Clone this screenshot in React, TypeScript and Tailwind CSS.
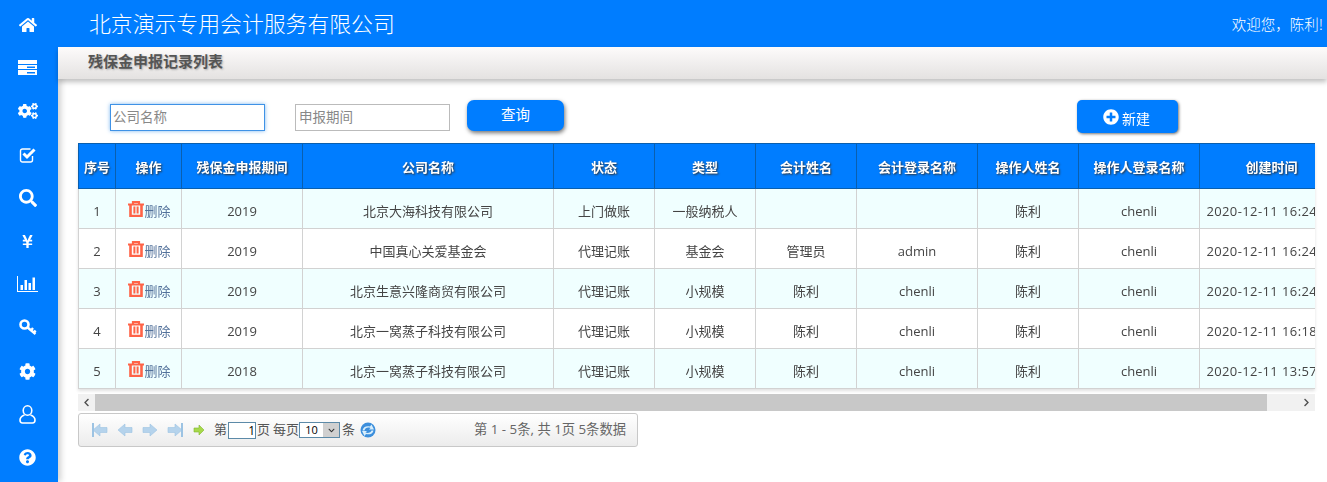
import { FaHome, FaCogs, FaSearch, FaYenSign, FaCog, FaQuestionCircle, FaPlusCircle, FaChevronLeft, FaChevronRight, FaChevronDown } from "react-icons/fa";

const font = "font-['Open_Sans','Noto_Sans_CJK_SC',sans-serif]";

function ServerIcon() {
  return (
    <svg viewBox="0 0 19 15" className="w-[19px] h-[15px]" fill="white">
      <rect x="0" y="0" width="19" height="4" />
      <path fillRule="evenodd" d="M0 5h19v4H0zM9 6.500v1.500h8V6.500z" />
      <path fillRule="evenodd" d="M0 10h19v5H0zM9 12v1.500h8V12z" />
    </svg>
  );
}

function CheckIcon() {
  return (
    <svg viewBox="0 0 18 18" className="w-[18px] h-[18px]" fill="none" stroke="white">
      <path d="M13.500 10v4a2 2 0 0 1-2 2h-8a2 2 0 0 1-2-2V5a2 2 0 0 1 2-2h8" strokeWidth="1.400" />
      <path d="M4.500 7.500l3.500 3.500 7.500-7.500" strokeWidth="3" />
    </svg>
  );
}

function ChartIcon() {
  return (
    <svg viewBox="0 0 21 16" className="w-[21px] h-[16px]" fill="white">
      <path d="M0 0h1v15h20.500v1H0z" />
      <rect x="3.500" y="9" width="2.500" height="5" />
      <rect x="7.500" y="4" width="2.500" height="10" />
      <rect x="11.500" y="7" width="2.500" height="7" />
      <rect x="15.500" y="1.500" width="2.500" height="12.500" />
    </svg>
  );
}

function KeyIcon() {
  return (
    <svg viewBox="0 0 18 17" className="w-[18px] h-[17px]">
      <circle cx="5.500" cy="5.500" r="4" fill="none" stroke="white" strokeWidth="2.600" />
      <path d="M8 8l8.500 7M12 11.500l2-2.500M14.800 13.800l1.800-2.300" fill="none" stroke="white" strokeWidth="2.400" />
    </svg>
  );
}

function UserIcon() {
  return (
    <svg viewBox="0 0 17 19" className="w-[17px] h-[19px]" fill="none" stroke="white" strokeWidth="1.600">
      <ellipse cx="8.500" cy="5.500" rx="4.300" ry="4.700" />
      <path d="M5.500 10C3 11 1 12.500 1 15c0 2 .8 3 2.500 3h10c1.700 0 2.500-1 2.500-3 0-2.500-2-4-4.500-5" />
    </svg>
  );
}

const navIcons = [
  <FaHome className="w-[18px] h-[18px]" />,
  <ServerIcon />,
  <FaCogs className="w-[20px] h-[18px]" />,
  <CheckIcon />,
  <FaSearch className="w-[18px] h-[18px]" />,
  <FaYenSign className="w-[13px] h-[15px]" />,
  <ChartIcon />,
  <KeyIcon />,
  <FaCog className="w-[17px] h-[17px]" />,
  <UserIcon />,
  <FaQuestionCircle className="w-[17px] h-[17px]" />,
];

const columns = [
  { title: "序号", width: 37 },
  { title: "操作", width: 66 },
  { title: "残保金申报期间", width: 121 },
  { title: "公司名称", width: 251 },
  { title: "状态", width: 101 },
  { title: "类型", width: 101 },
  { title: "会计姓名", width: 101 },
  { title: "会计登录名称", width: 121 },
  { title: "操作人姓名", width: 101 },
  { title: "操作人登录名称", width: 121 },
  { title: "创建时间", width: 144 },
];

const rows = [
  ["1", "2019", "北京大海科技有限公司", "上门做账", "一般纳税人", "", "", "陈利", "chenli", "2020-12-11 16:24:51"],
  ["2", "2019", "中国真心关爱基金会", "代理记账", "基金会", "管理员", "admin", "陈利", "chenli", "2020-12-11 16:24:30"],
  ["3", "2019", "北京生意兴隆商贸有限公司", "代理记账", "小规模", "陈利", "chenli", "陈利", "chenli", "2020-12-11 16:24:10"],
  ["4", "2019", "北京一窝蒸子科技有限公司", "代理记账", "小规模", "陈利", "chenli", "陈利", "chenli", "2020-12-11 16:18:42"],
  ["5", "2018", "北京一窝蒸子科技有限公司", "代理记账", "小规模", "陈利", "chenli", "陈利", "chenli", "2020-12-11 13:57:21"],
];

function TrashIcon() {
  return (
    <svg viewBox="0 0 16 16" className="w-[16px] h-[16px] shrink-0 mt-[-6px]">
      <path d="M0 3.500h16M5 3.500V1h6v2.500" fill="none" stroke="#ff6347" strokeWidth="2.200" />
      <path d="M2.500 3.500V15h11V3.500" fill="none" stroke="#ff6347" strokeWidth="2.600" />
      <path d="M6.400 5.500v7M9.600 5.500v7" fill="none" stroke="#ff6347" strokeWidth="2" />
    </svg>
  );
}

function RefreshIcon() {
  return (
    <svg viewBox="0 0 16 16" className="ml-[5px] w-[16px] h-[16px]">
      <circle cx="8" cy="8" r="7.500" fill="#3d8fdc" />
      <path d="M2.500 8.500C3 5 6.500 3.500 10 4.500L11.500 2.500 14 7.500H9L10.500 6C7.500 5 5 6 4.500 8.500z" fill="#d8eefc" />
      <path d="M13.500 8.500C13 12 9 13 6 12L4.500 14 2 9h5L5.500 10.500C8 11.500 11 10.500 11.500 8.500z" fill="#d8eefc" />
    </svg>
  );
}

function PagerArrow({ dir, stop }: { dir: "left" | "right"; stop?: boolean }) {
  const arrow = dir === "left" ? "M1 8l7-6v3.500h7v5H8V14z" : "M15 8L8 2v3.500H1v5h7V14z";
  return (
    <svg viewBox="0 0 16 16" className="w-[16px] h-[16px]">
      <path d={arrow} fill="#b5d3ec" stroke="#9cc3e3" strokeWidth="0.600" />
      {stop && <rect x={dir === "left" ? 0 : 14} y="1" width="2" height="14" fill="#9cc3e3" />}
    </svg>
  );
}

export default function App() {
  return (
    <div className={`flex h-[482px] w-[1327px] overflow-hidden bg-white ${font}`}>
      <aside className="w-[58px] shrink-0 bg-[#007dff] pt-[3px] flex flex-col items-center text-white z-10 shadow-[3px_0_6px_rgba(0,0,0,0.18)]">
        {navIcons.map((icon, i) => (
          <div key={i} className="h-[43.3px] w-full flex items-center justify-center pr-[3px]">
            {icon}
          </div>
        ))}
      </aside>

      <div className="flex-1 min-w-0 flex flex-col">
        <header className="relative z-20 h-[47px] shrink-0 bg-[#007dff] text-white flex items-center justify-between pl-[31px] pr-[4px] font-['Noto_Sans_CJK_SC',sans-serif]">
          <span className="text-[21.85px] font-light">北京演示专用会计服务有限公司</span>
          <span className="text-[14.5px] font-light">欢迎您，陈利!</span>
        </header>

        <div className="relative z-20 h-[32px] shrink-0 bg-gradient-to-b from-[#fdfbfb] to-[#e4e2e1] shadow-[0_3px_5px_rgba(0,0,0,0.25)] pl-[30px] pb-[4px] flex items-center text-[15px] font-bold text-[#555] [text-shadow:1px_1px_2px_#aaa]">
          残保金申报记录列表
        </div>

        <div className="flex items-start pt-[21px] h-[64px] shrink-0">
          <input
            autoFocus
            placeholder="公司名称"
            className="ml-[52px] mt-[4px] w-[155px] h-[27px] border border-[#3f92e6] shadow-[0_0_4px_#7db8f0] pl-[2px] pb-[2px] text-[13.5px] outline-none placeholder:text-[#888]"
          />
          <input
            placeholder="申报期间"
            className="ml-[30px] mt-[4px] w-[155px] h-[27px] border border-[#bbb] pl-[3px] pb-[2px] text-[13.5px] outline-none placeholder:text-[#888]"
          />
          <button className="ml-[17px] w-[97px] h-[31px] rounded-[7px] bg-[#007dff] text-white text-[14.5px] shadow-[1px_2px_4px_rgba(0,0,0,0.55)] pb-[2px]">
            查询
          </button>
          <button className="ml-[513px] w-[101px] h-[33px] rounded-[5px] bg-[#007dff] text-white text-[14px] shadow-[1px_1px_3px_rgba(0,0,0,0.55)] flex items-center justify-center gap-[3px] pt-[3px] pr-[2px]">
            <FaPlusCircle className="w-[16px] h-[16px] mt-[-2px]" />
            新建
          </button>
        </div>

        <div className="ml-[20px] w-[1237px] overflow-hidden shadow-[0_2px_3px_rgba(0,0,0,0.12)]">
          <table className="table-fixed border-collapse w-[1264px] text-[13px] text-[#444]">
            <colgroup>
              {columns.map((c) => (
                <col key={c.title} style={{ width: c.width }} />
              ))}
            </colgroup>
            <thead>
              <tr className="h-[45px] bg-[#007dff] text-white text-[13px] font-bold [text-shadow:1px_1px_2px_#333]">
                {columns.map((c) => (
                  <th key={c.title} className="border border-[#0a5fae] font-bold whitespace-nowrap pt-[3px]">
                    {c.title}
                  </th>
                ))}
              </tr>
            </thead>
            <tbody>
              {rows.map((row, i) => (
                <tr key={row[0]} className={`h-[40px] ${i % 2 === 0 ? "bg-[#f0ffff]" : "bg-white"}`}>
                  <td className="border border-[#d2d2d2] text-center pt-[7px]">{row[0]}</td>
                  <td className="border border-[#d2d2d2] pt-[7px]">
                    <div className="flex items-center justify-center text-[#53729b] pl-[2px]">
                      <TrashIcon />
                      删除
                    </div>
                  </td>
                  {row.slice(1).map((cell, j) => (
                    <td key={j} className={`border border-[#d2d2d2] text-center whitespace-nowrap pt-[7px] ${j === 8 ? "tracking-[0.4px]" : ""}`}>
                      {cell}
                    </td>
                  ))}
                </tr>
              ))}
            </tbody>
          </table>
        </div>

        <div className="ml-[20px] mt-[5px] w-[1237px] h-[17px] bg-[#f1f1f1] flex items-center justify-between shrink-0">
          <div className="w-[17px] flex justify-center text-[#505050]">
            <FaChevronLeft className="w-[9px] h-[9px]" />
          </div>
          <div className="w-[1172px] h-full bg-[#c8c8c8] mr-auto" />
          <div className="w-[17px] flex justify-center text-[#505050]">
            <FaChevronRight className="w-[9px] h-[9px]" />
          </div>
        </div>

        <div className="ml-[20px] mt-[2px] w-[560px] h-[34px] shrink-0 rounded-[3px] border border-[#c8c8c8] bg-gradient-to-b from-white to-[#ececec] flex items-center pl-[13px] pr-[11px] text-[13px] text-[#555]">
          <div className="flex items-center gap-[9px]">
            <PagerArrow dir="left" stop />
            <PagerArrow dir="left" />
            <PagerArrow dir="right" />
            <PagerArrow dir="right" stop />
          </div>
          <svg viewBox="0 0 12 12" className="ml-[10px] w-[12px] h-[12px]">
            <path d="M1 4h5V1l5 5-5 5V8H1z" fill="#a7d94a" stroke="#7fb52f" strokeWidth="0.600" />
          </svg>
          <span className="ml-[9px]">第</span>
          <span className="ml-[1px] w-[28px] h-[17px] border border-[#5c8aa8] bg-white text-right text-black text-[12px] leading-[16px]">1</span>
          <span className="ml-[1px]">页</span>
          <span className="ml-[3px]">每页</span>
          <span className="w-[41px] h-[16px] border border-[#5c8aa8] bg-white flex items-center text-black text-[11px]">
            <span className="flex-1 text-center">10</span>
            <span className="w-[16px] h-full bg-[#d0d0d0] flex items-center justify-center text-[#333]">
              <FaChevronDown className="w-[7px] h-[7px]" />
            </span>
          </span>
          <span className="ml-[2px]">条</span>
          <RefreshIcon />
          <span className="ml-auto text-[#666] text-[13.3px]">第 1 - 5条, 共 1页 5条数据</span>
        </div>
      </div>
    </div>
  );
}
